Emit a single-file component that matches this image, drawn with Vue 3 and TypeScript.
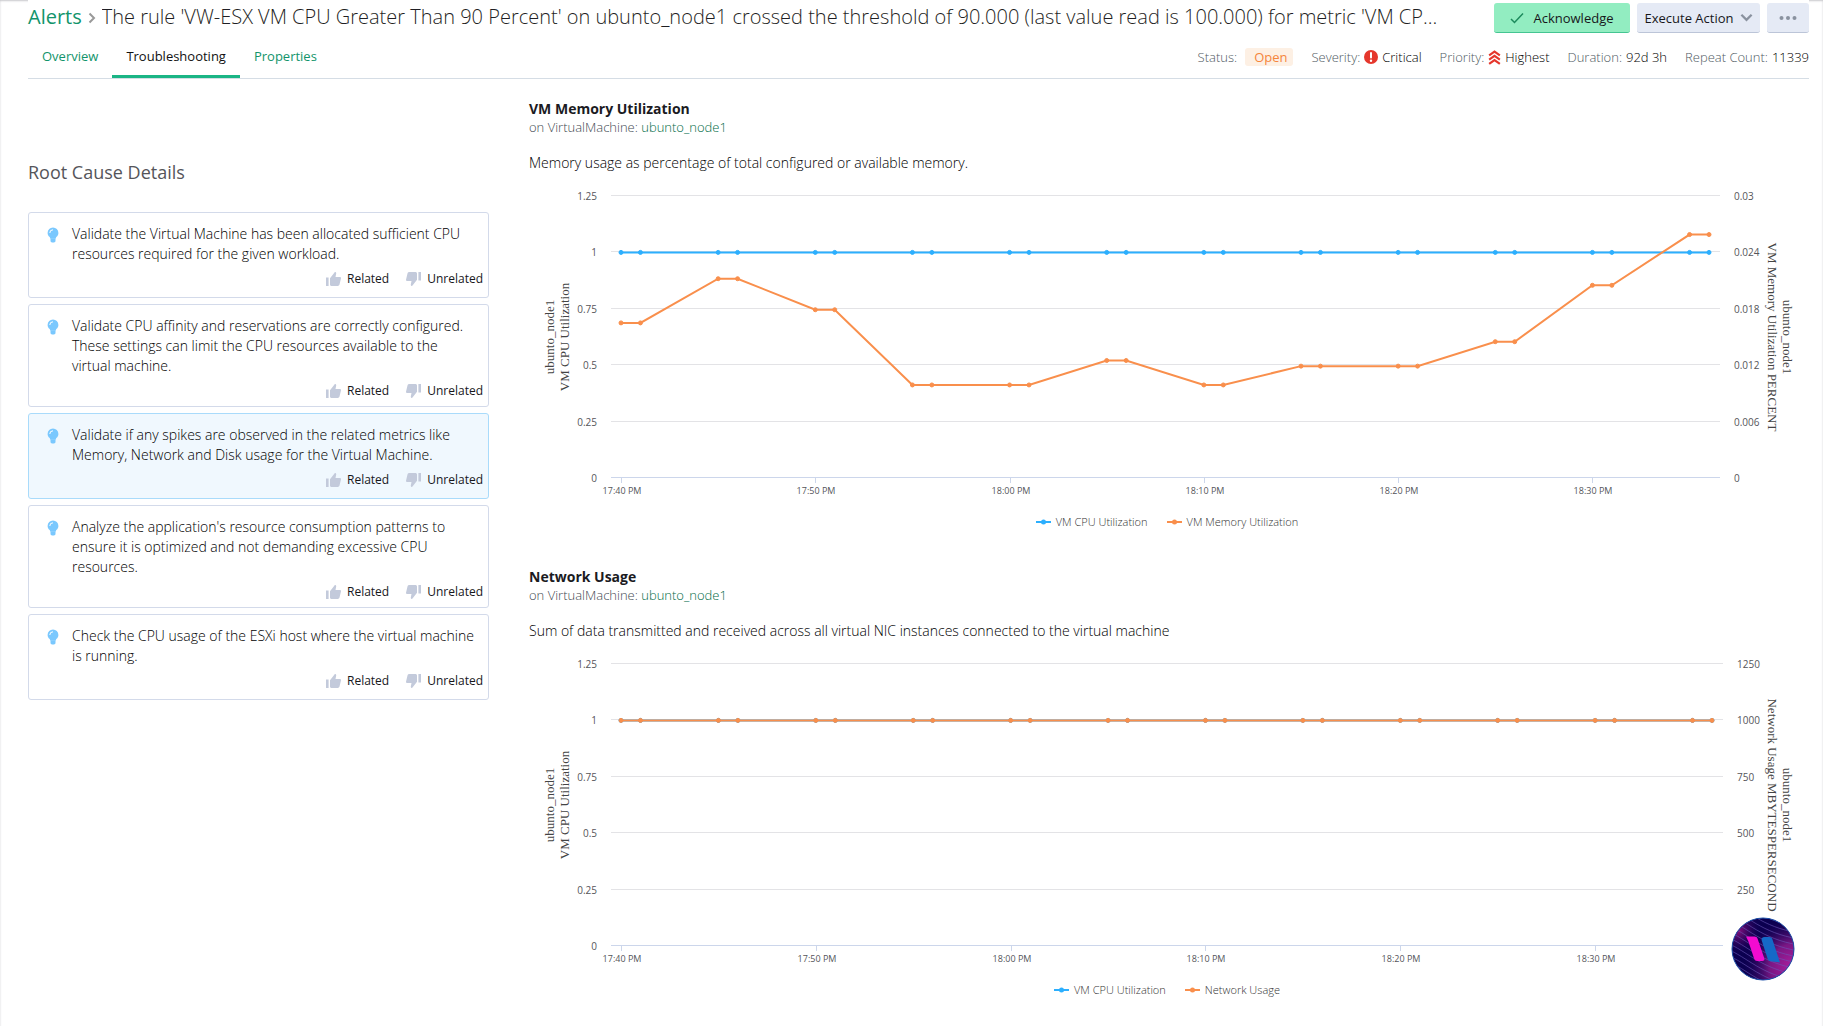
<script setup lang="ts">
import { computed, onBeforeUnmount, onMounted, ref } from 'vue'

interface Series {
  name: string
  color: string
  max: number
  values: number[]
}

interface Chart {
  id: string
  title: string
  description: string
  rightInset: number
  leftTicks: string[]
  rightTicks: string[]
  leftLabel: string
  rightLabel: string
  series: Series[]
}

interface Cause {
  text: string
  active: boolean
}

const BLUE = '#2caffe'
const ORANGE = '#f98f4c'

const tabs = ['Overview', 'Troubleshooting', 'Properties']
const activeTab = ref('Troubleshooting')

const causes: Cause[] = [
  { text: 'Validate the Virtual Machine has been allocated sufficient CPU resources required for the given workload.', active: false },
  { text: 'Validate CPU affinity and reservations are correctly configured. These settings can limit the CPU resources available to the virtual machine.', active: false },
  { text: 'Validate if any spikes are observed in the related metrics like Memory, Network and Disk usage for the Virtual Machine.', active: true },
  { text: "Analyze the application's resource consumption patterns to ensure it is optimized and not demanding excessive CPU resources.", active: false },
  { text: 'Check the CPU usage of the ESXi host where the virtual machine is running.', active: false },
]

// One value per five-minute poll; each poll is plotted twice, a minute apart.
const flat = (v: number): number[] => Array.from({ length: 12 }, () => v)

const charts: Chart[] = [
  {
    id: 'memory',
    title: 'VM Memory Utilization',
    description: 'Memory usage as percentage of total configured or available memory.',
    rightInset: 85,
    leftTicks: ['0', '0.25', '0.5', '0.75', '1', '1.25'],
    rightTicks: ['0', '0.006', '0.012', '0.018', '0.024', '0.03'],
    leftLabel: 'VM CPU Utilization',
    rightLabel: 'VM Memory Utilization PERCENT',
    series: [
      { name: 'VM CPU Utilization', color: BLUE, max: 1.25, values: flat(1) },
      {
        name: 'VM Memory Utilization',
        color: ORANGE,
        max: 0.03,
        values: [0.0165, 0.0212, 0.0179, 0.0099, 0.0099, 0.0125, 0.0099, 0.0119, 0.0119, 0.0145, 0.0205, 0.0259],
      },
    ],
  },
  {
    id: 'network',
    title: 'Network Usage',
    description: 'Sum of data transmitted and received across all virtual NIC instances connected to the virtual machine',
    rightInset: 82,
    leftTicks: ['0', '0.25', '0.5', '0.75', '1', '1.25'],
    rightTicks: ['', '250', '500', '750', '1000', '1250'],
    leftLabel: 'VM CPU Utilization',
    rightLabel: 'Network Usage MBYTESPERSECOND',
    series: [
      { name: 'VM CPU Utilization', color: BLUE, max: 1.25, values: flat(1) },
      { name: 'Network Usage', color: ORANGE, max: 1250, values: flat(1000) },
    ],
  },
]

const times = ['17:40 PM', '17:50 PM', '18:00 PM', '18:10 PM', '18:20 PM', '18:30 PM']

const LEFT = 82
const TOP = 22
const PLOT_HEIGHT = 282
const BOTTOM = TOP + PLOT_HEIGHT
const MIDDLE = TOP + PLOT_HEIGHT / 2 + 1
const PAD = 10
const MINUTES = 56

const host = ref<HTMLElement | null>(null)
const width = ref(1276)
let observer: ResizeObserver | undefined

const measure = () => {
  if (host.value) width.value = host.value.clientWidth
}

onMounted(() => {
  measure()
  observer = new ResizeObserver(measure)
  if (host.value) observer.observe(host.value)
})
onBeforeUnmount(() => observer?.disconnect())

const drawn = computed(() =>
  charts.map((chart) => {
    const right = width.value - chart.rightInset
    const x = (minute: number) => LEFT + PAD + ((right - LEFT - PAD * 2 - 1) * minute) / MINUTES
    const y = (value: number, max: number) => BOTTOM + 1 - (PLOT_HEIGHT * value) / max
    return {
      ...chart,
      right,
      rows: chart.leftTicks.map((label, i) => ({
        label,
        rightLabel: chart.rightTicks[i],
        y: Math.round(BOTTOM - (PLOT_HEIGHT * i) / 5),
      })),
      columns: times.map((label, i) => ({ label, x: Math.round(x(i * 10)) })),
      lines: chart.series.map((s) => {
        const points = s.values.flatMap((v, i) => [
          { x: x(i * 5), y: y(v, s.max) },
          { x: x(i * 5 + 1), y: y(v, s.max) },
        ])
        return { ...s, points, path: points.map((p) => `${p.x},${p.y}`).join(' ') }
      }),
    }
  }),
)
</script>

<template>
  <div class="page">
    <header class="header">
      <div class="title-row">
        <h1 class="title">
          <a class="crumb" href="#">Alerts</a>
          <svg class="crumb-sep" viewBox="0 0 8 12" aria-hidden="true"><path d="M1.5 1.5 6 6l-4.500 4.500" /></svg>
          <span class="title-text">The rule 'VW-ESX VM CPU Greater Than 90 Percent' on ubunto_node1 crossed the threshold of 90.000 (last value read is 100.000) for metric 'VM CP...</span>
        </h1>
        <div class="actions">
          <button type="button" class="btn btn-ack">
            <svg class="check" viewBox="0 0 14 12" aria-hidden="true"><path d="M1 7l3.500 3.500L13 1.500" /></svg>
            Acknowledge
          </button>
          <button type="button" class="btn btn-exec">
            Execute Action
            <svg class="chevron" viewBox="0 0 14 9" aria-hidden="true"><path d="M1.500 1.500 7 7l5.500-5.500" /></svg>
          </button>
          <button type="button" class="btn btn-more" aria-label="More">
            <svg class="dots" viewBox="0 0 18 4" aria-hidden="true">
              <circle cx="2.500" cy="2" r="2" /><circle cx="9" cy="2" r="2" /><circle cx="15.500" cy="2" r="2" />
            </svg>
          </button>
        </div>
      </div>

      <div class="sub-row">
        <nav class="tabs">
          <a
            v-for="tab in tabs"
            :key="tab"
            href="#"
            class="tab"
            :class="{ active: tab === activeTab }"
            @click.prevent="activeTab = tab"
          >{{ tab }}</a>
        </nav>
        <div class="facts">
          <span class="fact fact-status"><span class="key">Status:</span><span class="badge">Open</span></span>
          <span class="fact">
            <span class="key">Severity:</span>
            <svg class="sev" viewBox="0 0 14 14" aria-hidden="true">
              <circle cx="7" cy="7" r="7" fill="#e5372c" />
              <path d="M7 3v4.600" stroke="#fff" stroke-width="2" stroke-linecap="round" />
              <circle cx="7" cy="10.700" r="1.200" fill="#fff" />
            </svg>
            Critical
          </span>
          <span class="fact">
            <span class="key">Priority:</span>
            <svg class="prio" viewBox="0 0 12 14" aria-hidden="true"><path d="M1 5l5-3.500L11 5M1 9l5-3.500L11 9M1 13l5-3.500L11 13" /></svg>
            Highest
          </span>
          <span class="fact"><span class="key">Duration:</span>92d 3h</span>
          <span class="fact"><span class="key">Repeat Count:</span>11339</span>
        </div>
      </div>
    </header>

    <main class="body">
      <aside class="causes">
        <h2 class="causes-title">Root Cause Details</h2>
        <ul class="cause-list">
          <li v-for="cause in causes" :key="cause.text" class="cause" :class="{ active: cause.active }">
            <svg class="bulb" viewBox="0 0 12 16" aria-hidden="true">
              <path d="M6 .5A5.400 5.400 0 0 0 .6 5.900c0 2 .9 2.900 1.800 3.900.5.600.8 1.100.8 1.700h5.600c0-.6.3-1.100.8-1.700.9-1 1.800-1.900 1.800-3.900A5.400 5.400 0 0 0 6 .5z" fill="#7ac8fe" />
              <path d="M3.500 11.300h5v2.500c0 .9-.7 1.700-1.600 1.700H5.100c-.9 0-1.600-.8-1.600-1.700z" fill="#7ac8fe" />
              <path d="M2.800 6A3.200 3.200 0 0 1 6 2.800" fill="none" stroke="#fff" stroke-width="1" />
            </svg>
            <div class="cause-main">
              <p class="cause-text">{{ cause.text }}</p>
              <div class="votes">
                <button type="button" class="vote">
                  <svg class="thumb" viewBox="0 0 15 14" aria-hidden="true">
                    <path d="M0 5.500h2.600V14H0zM4 6.200 8.500.4c.3-.4.900-.5 1.300-.1.300.3.500.7.4 1.200L9.500 5H14c.7 0 1.200.6 1 1.300l-1.500 6.300c-.2.800-.9 1.400-1.800 1.400H5.500C4.700 14 4 13.300 4 12.500z" />
                  </svg>
                  Related
                </button>
                <button type="button" class="vote">
                  <svg class="thumb down" viewBox="0 0 15 14" aria-hidden="true">
                    <path d="M0 5.500h2.600V14H0zM4 6.200 8.500.4c.3-.4.900-.5 1.300-.1.300.3.500.7.4 1.200L9.500 5H14c.7 0 1.200.6 1 1.300l-1.500 6.300c-.2.800-.9 1.400-1.800 1.400H5.500C4.700 14 4 13.300 4 12.500z" />
                  </svg>
                  Unrelated
                </button>
              </div>
            </div>
          </li>
        </ul>
      </aside>

      <div ref="host" class="charts">
        <section v-for="chart in drawn" :key="chart.id" class="chart">
          <h3 class="chart-title">{{ chart.title }}</h3>
          <p class="chart-sub">on VirtualMachine: <a href="#">ubunto_node1</a></p>
          <p class="chart-desc">{{ chart.description }}</p>
          <svg class="plot" role="img" :aria-label="chart.title">
            <g v-for="row in chart.rows" :key="row.y">
              <rect class="grid" :class="{ base: row.label === '0' }" :x="LEFT" :y="row.y" :width="chart.right - LEFT" height="1" />
              <text class="tick" :x="LEFT - 14" :y="row.y + 5" text-anchor="end">{{ row.label }}</text>
              <text class="tick" :x="chart.right + 14" :y="row.y + 5">{{ row.rightLabel }}</text>
            </g>
            <g v-for="col in chart.columns" :key="col.label">
              <rect class="grid base" :x="col.x" :y="BOTTOM" width="1" height="6" />
              <text class="tick time" :x="col.x + 1" :y="BOTTOM + 17" text-anchor="middle">{{ col.label }}</text>
            </g>
            <g v-for="line in chart.lines" :key="line.name" :fill="line.color" :stroke="line.color">
              <polyline class="line" :points="line.path" />
              <circle v-for="(p, i) in line.points" :key="i" :cx="p.x" :cy="p.y" r="2" stroke-width="1" />
            </g>
            <text class="axis" text-anchor="middle" :transform="`translate(25 ${MIDDLE}) rotate(-90)`">
              <tspan x="0" y="0">ubunto_node1</tspan>
              <tspan x="0" y="15">{{ chart.leftLabel }}</tspan>
            </text>
            <text class="axis" text-anchor="middle" :transform="`translate(${width - 22} ${MIDDLE}) rotate(90)`">
              <tspan x="0" y="0">ubunto_node1</tspan>
              <tspan x="0" y="15">{{ chart.rightLabel }}</tspan>
            </text>
          </svg>
          <ul class="legend">
            <li v-for="s in chart.series" :key="s.name">
              <svg class="mark" viewBox="0 0 15 6" aria-hidden="true">
                <path d="M0 3h15" :stroke="s.color" stroke-width="2" />
                <circle cx="7.500" cy="3" r="2.500" :fill="s.color" />
              </svg>
              {{ s.name }}
            </li>
          </ul>
        </section>
      </div>
    </main>

    <button type="button" class="assistant" aria-label="Assistant">
      <svg viewBox="0 0 64 64" aria-hidden="true">
        <defs>
          <radialGradient id="glow-a" cx="1" cy=".8" r=".85">
            <stop offset="0" stop-color="#b01ea0" />
            <stop offset=".45" stop-color="#7a1784" />
            <stop offset="1" stop-color="#0b0050" stop-opacity="0" />
          </radialGradient>
          <radialGradient id="glow-b" cx=".1" cy=".2" r=".4">
            <stop offset="0" stop-color="#8a1080" />
            <stop offset="1" stop-color="#0b0050" stop-opacity="0" />
          </radialGradient>
          <clipPath id="disc"><circle cx="32" cy="32" r="31" /></clipPath>
        </defs>
        <circle cx="32" cy="32" r="31" fill="#0b0050" />
        <circle cx="32" cy="32" r="31" fill="url(#glow-a)" />
        <circle cx="32" cy="32" r="31" fill="url(#glow-b)" />
        <g clip-path="url(#disc)" fill="none" stroke="#6a56b8" stroke-opacity=".6" stroke-width="1">
          <path v-for="n in 16" :key="n" :d="`M-4 ${n * 6 - 34}C16 ${n * 6 - 26} 30 ${n * 6 - 8} 68 ${n * 6 - 2}`" />
        </g>
        <circle cx="32" cy="32" r="31" fill="none" stroke="#1c4fa8" stroke-width="1" />
        <path d="M15 19.500h8.500c1.500 0 2.600.8 3.100 2.200l6.700 19.500c.6 1.700-.4 2.800-2 2.800h-5c-1.500 0-2.600-.8-3.100-2.200l-5.700-17z" fill="#f30bd0" />
        <path d="M33.500 20h4.800c1.500 0 2.600.8 3.100 2.200L49 45.500l-9.500-1.200c-1.400-.2-2.300-.9-2.800-2.200l-6-18.500c-.6-1.900.7-3.600 2.800-3.600z" fill="#1569c7" />
      </svg>
    </button>
  </div>
</template>

<style>
body {
  margin: 0;
  background: #fff;
}
</style>

<style scoped>
.page {
  min-height: 100vh;
  padding: 0 14px 0 28px;
  box-sizing: border-box;
  box-shadow: inset 0 1px 2px #c8c8cc;
  background: #fff;
  color: #1b1b1f;
  font-family: "Open Sans", "Noto Sans", sans-serif;
  font-size: 13px;
}
a {
  color: #12946b;
  text-decoration: none;
}
h1,
h2,
h3,
p,
ul {
  margin: 0;
  padding: 0;
  font-weight: 400;
  list-style: none;
}
button {
  font: inherit;
  color: inherit;
  cursor: pointer;
}
.header {
  background: #fff;
  border-bottom: 1px solid #d5dde5;
}
.title-row {
  display: flex;
  align-items: center;
  justify-content: space-between;
  height: 36px;
  gap: 40px;
}
.title {
  display: flex;
  align-items: center;
  min-width: 0;
  height: 36px;
  padding-bottom: 3px;
  box-sizing: border-box;
  font-size: 20px;
  font-weight: 300;
  line-height: 32px;
  color: #1f1f24;
}
.crumb {
  font-weight: 400;
}
.crumb-sep {
  flex: none;
  width: 8px;
  height: 12px;
  margin: 2px 6px 0;
  fill: none;
  stroke: #999;
  stroke-width: 2;
}
.title-text {
  overflow: hidden;
  text-overflow: ellipsis;
  white-space: nowrap;
}
.actions {
  display: flex;
  flex: none;
  gap: 7px;
}
.btn {
  display: flex;
  align-items: center;
  justify-content: center;
  height: 30px;
  padding: 0 4px;
  border: 0;
  border-bottom: 1px solid #bcc5d8;
  border-radius: 3px;
  background: #e5eaf5;
  color: #17171b;
  white-space: nowrap;
}
.btn-ack {
  width: 136px;
  gap: 9px;
  border-bottom-color: #45c592;
  background: #92edc1;
}
.btn-exec {
  width: 123px;
  gap: 6px;
}
.btn-more {
  width: 42px;
}
.check {
  width: 14px;
  height: 12px;
  fill: none;
  stroke: #1c8a5c;
  stroke-width: 1.5;
}
.chevron {
  width: 13px;
  height: 9px;
  fill: none;
  stroke: #8a929f;
  stroke-width: 2.5;
}
.dots {
  width: 18px;
  height: 4px;
  fill: #8a929f;
}
.sub-row {
  display: flex;
  align-items: stretch;
  justify-content: space-between;
  height: 42px;
}
.tabs {
  display: flex;
}
.tab {
  padding: 10px 14px 0;
  border-bottom: 3px solid transparent;
  line-height: 20px;
}
.tab.active {
  border-bottom-color: #1bb585;
  color: #111;
}
.facts {
  display: flex;
  align-items: center;
  gap: 18px;
  font-weight: 300;
  color: #000;
}
.fact {
  display: flex;
  align-items: center;
  gap: 4px;
  line-height: 18px;
}
.fact-status {
  gap: 8px;
}
.key {
  color: #4f5a63;
}
.badge {
  padding: 0 6px 0 9px;
  border-radius: 3px;
  background: #fdf0e4;
  color: #f5853b;
  font-weight: 400;
}
.sev {
  width: 14px;
  height: 14px;
}
.prio {
  width: 13px;
  height: 15px;
  fill: none;
  stroke: #e5372c;
  stroke-width: 2;
}
.body {
  display: grid;
  grid-template-columns: 461px minmax(0, 1fr);
  column-gap: 40px;
  padding-right: 4px;
}
.causes-title {
  padding-top: 81px;
  font-size: 18px;
  line-height: 24px;
  color: #55555a;
}
.cause-list {
  display: flex;
  flex-direction: column;
  gap: 6px;
  margin-top: 28px;
}
.cause {
  display: flex;
  min-height: 86px;
  padding: 11px 5px 5px 18px;
  box-sizing: border-box;
  border: 1px solid #d3daea;
  border-radius: 3px;
}
.cause.active {
  border-color: #a9dbfb;
  background: #f0f8fe;
}
.bulb {
  flex: none;
  width: 12px;
  height: 16px;
  margin: 3px 13px 0 0;
}
.cause-main {
  flex: 1;
}
.cause-text {
  padding-right: 6px;
  font-size: 14px;
  font-weight: 300;
  line-height: 20px;
  color: #000;
}
.votes {
  display: flex;
  justify-content: flex-end;
  gap: 17px;
  margin-top: 5px;
}
.vote {
  display: flex;
  align-items: center;
  gap: 6px;
  padding: 0;
  border: 0;
  background: none;
  font-size: 12px;
  line-height: 20px;
  color: #17171b;
}
.thumb {
  width: 15px;
  height: 14px;
  fill: #c3cadb;
}
.thumb.down {
  transform: rotate(180deg);
}
.charts {
  padding-top: 20px;
}
.chart {
  padding-bottom: 36px;
}
.chart-title {
  font-size: 14px;
  font-weight: 700;
  line-height: 20px;
}
.chart-sub {
  line-height: 17px;
  font-weight: 300;
  color: #3f4a52;
}
.chart-sub a {
  color: #006b45;
}
.chart-desc {
  margin-top: 17px;
  font-size: 14px;
  font-weight: 300;
  line-height: 20px;
  color: #000;
}
.plot {
  display: block;
  width: 100%;
  height: 340px;
}
.grid {
  fill: #e3e3e6;
}
.grid.base {
  fill: #ccd6eb;
}
.tick {
  font-size: 10px;
  fill: #55555a;
}
.tick.time {
  font-size: 9px;
}
.axis {
  font-family: "Liberation Serif", serif;
  font-size: 13px;
  fill: #444;
}
.line {
  fill: none;
  stroke-width: 2;
}
.legend {
  display: flex;
  justify-content: center;
  gap: 19px;
  font-size: 11px;
  font-weight: 300;
  line-height: 18px;
  color: #333;
}
.legend li {
  display: flex;
  align-items: center;
  gap: 5px;
}
.mark {
  width: 15px;
  height: 6px;
}
.assistant {
  position: fixed;
  right: 28px;
  bottom: 45px;
  width: 64px;
  height: 64px;
  padding: 0;
  border: 0;
  border-radius: 50%;
  background: none;
}
.assistant svg {
  display: block;
}
</style>
